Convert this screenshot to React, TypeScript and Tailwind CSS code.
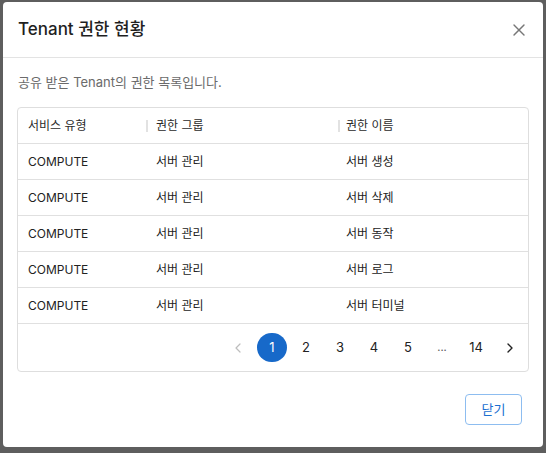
import { X, ChevronLeft, ChevronRight } from "lucide-react";

const rows = [
  { type: "COMPUTE", group: "서버 관리", name: "서버 생성" },
  { type: "COMPUTE", group: "서버 관리", name: "서버 삭제" },
  { type: "COMPUTE", group: "서버 관리", name: "서버 동작" },
  { type: "COMPUTE", group: "서버 관리", name: "서버 로그" },
  { type: "COMPUTE", group: "서버 관리", name: "서버 터미널" },
];

const pages = ["1", "2", "3", "4", "5", "…", "14"];

export default function App() {
  return (
    <div
      className="h-[453px] w-[546px] overflow-hidden bg-[#5e5e5e] pl-[3px] pt-[2px]"
      style={{ fontFamily: 'Inter, "Noto Sans CJK KR", "Noto Sans", sans-serif' }}
    >
      <div className="flex h-[445px] w-[540px] flex-col rounded-[4px] bg-white">
        {/* Header */}
        <div className="flex h-[56px] items-center justify-between border-b border-[#e3e3e3] pl-[15px] pr-[14px]">
          <h2 className="text-[17px] font-medium text-[#1f1f1f]">Tenant 권한 현황</h2>
          <X size={20} strokeWidth={1.7} className="text-[#777]" />
        </div>

        {/* Body */}
        <div className="px-[14px] pt-[15px]">
          <p className="pl-[1px] text-[13px] leading-[18px] text-[#6b6b6b]">
            공유 받은 Tenant의 권한 목록입니다.
          </p>

          <div className="mt-[16px] rounded-[4px] border border-[#dedede]">
            {/* Table header */}
            <div className="flex h-[36px] items-center border-b border-[#e0e0e0] text-[12px] text-[#2a2a2a]">
              <div className="w-[128px] pl-[10px]">서비스 유형</div>
              <div className="flex w-[192px] items-center">
                <span className="h-[12px] w-[2px] bg-[#e2e2e2]" />
                <span className="pl-[8px]">권한 그룹</span>
              </div>
              <div className="flex flex-1 items-center">
                <span className="h-[12px] w-[2px] bg-[#e2e2e2]" />
                <span className="pl-[6px]">권한 이름</span>
              </div>
            </div>

            {rows.map((r) => (
              <div
                key={r.name}
                className="flex h-[36px] items-center border-b border-[#e0e0e0] text-[12px] text-[#222]"
              >
                <div className="w-[128px] pl-[10px]">{r.type}</div>
                <div className="w-[192px] pl-[10px]">{r.group}</div>
                <div className="flex-1 pl-[8px]">{r.name}</div>
              </div>
            ))}

            {/* Pagination */}
            <div className="flex h-[47px] items-center justify-end gap-[4px] pr-[3px] text-[13px] text-[#222]">
              <div className="flex h-[30px] w-[30px] items-center justify-center text-[#bdbdbd]">
                <ChevronLeft size={16} strokeWidth={1.8} />
              </div>
              {pages.map((p) => (
                <div
                  key={p}
                  className={
                    p === "1"
                      ? "flex h-[29px] w-[30px] items-center justify-center rounded-full bg-[#1769c9] text-white"
                      : "flex h-[30px] w-[30px] items-center justify-center"
                  }
                >
                  {p === "…" ? <span className="text-[11px] text-[#555]">...</span> : p}
                </div>
              ))}
              <div className="flex h-[30px] w-[30px] items-center justify-center text-[#222]">
                <ChevronRight size={16} strokeWidth={2} />
              </div>
            </div>
          </div>
        </div>

        {/* Footer */}
        <div className="flex justify-end pr-[21px] pt-[22px]">
          <button className="h-[31px] w-[57px] rounded-[4px] border border-[#8dbdf0] text-[13px] text-[#1a6fd0]">
            닫기
          </button>
        </div>
      </div>
    </div>
  );
}
